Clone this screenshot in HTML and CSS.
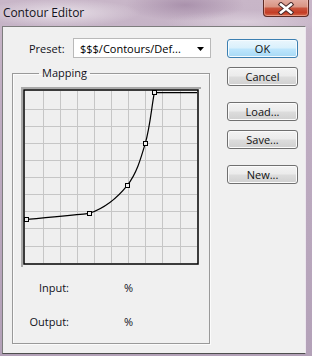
FILE: index.html
```html
<!DOCTYPE html>
<html>
<head>
<meta charset="utf-8">
<title>Contour Editor</title>
<link rel="stylesheet" href="styles.css">
</head>
<body>
<div class="window">
  <div class="titlebar">
    <span class="title">Contour Editor</span>
    <button class="close" aria-label="Close">
      <svg width="18" height="13" viewBox="0 0 18 13">
        <path d="M4 2.5 L14 10.5 M14 2.5 L4 10.5" stroke="#4a2a2a" stroke-width="4.6" stroke-linecap="square" fill="none"/>
        <path d="M4 2.5 L14 10.5 M14 2.5 L4 10.5" stroke="#ffffff" stroke-width="2.6" stroke-linecap="square" fill="none"/>
      </svg>
    </button>
  </div>
  <div class="client">
    <div class="left">
      <div class="preset-row">
        <span class="label">Preset:</span>
        <div class="select">
          <span class="select-text">$$$/Contours/Def...</span>
          <svg class="arrow" width="7" height="4" viewBox="0 0 7 4"><path d="M0 0 H7 L3.5 4 Z" fill="#000"/></svg>
        </div>
      </div>
      <fieldset class="group">
        <legend>Mapping</legend>
        <svg class="graph" width="180" height="180" viewBox="0 0 180 180">
          <rect x="0" y="0" width="180" height="180" fill="#f0f0f0"/>
          <path d="M1 0 V180 M0 1 H180" stroke="#a9a9a9" stroke-width="2"/>
          <rect x="3" y="3" width="174" height="174" fill="#efefef"/>
          <g stroke="#c6c6c6" stroke-width="1">
            <path d="M22.5 4 V176 M39.5 4 V176 M56.5 4 V176 M73.5 4 V176 M90.5 4 V176 M107.5 4 V176 M124.5 4 V176 M141.5 4 V176 M159.5 4 V176"/>
            <path d="M4 22.5 H176 M4 39.5 H176 M4 56.5 H176 M4 73.5 H176 M4 90.5 H176 M4 107.5 H176 M4 124.5 H176 M4 141.5 H176 M4 159.5 H176"/>
          </g>
          <rect x="3" y="3" width="174" height="174" fill="none" stroke="#000" stroke-width="1.5"/>
          <path d="M5.7 132.3 C26 130.5 48 128.5 68.3 126.3 C85.1 120.6 97 110 106.3 98.3 C115.6 86.6 119.8 71.7 124.3 56.3 C128.8 40.9 130.3 22.6 133.3 5.7 L176 5.7" fill="none" stroke="#000" stroke-width="1.2"/>
          <g fill="#eeeeee" stroke="#000" stroke-width="1">
            <rect x="3.5" y="130.5" width="4" height="4"/>
            <rect x="66.5" y="124.5" width="4" height="4"/>
            <rect x="104.5" y="96.5" width="4" height="4"/>
            <rect x="122.5" y="54.5" width="4" height="4"/>
            <rect x="131.5" y="3.5" width="4" height="4"/>
          </g>
        </svg>
        <div class="readouts">
          <div class="readout"><span class="rl">Input:</span><span class="pct">%</span></div>
          <div class="readout"><span class="rl">Output:</span><span class="pct">%</span></div>
        </div>
      </fieldset>
    </div>
    <div class="buttons">
      <button class="btn default">OK</button>
      <button class="btn">Cancel</button>
      <button class="btn spaced">Load...</button>
      <button class="btn">Save...</button>
      <button class="btn spaced">New...</button>
    </div>
  </div>
</div>
</body>
</html>
```

FILE: styles.css
```css
* { box-sizing: border-box; }
html, body { margin: 0; padding: 0; }
body {
  width: 312px;
  height: 356px;
  overflow: hidden;
  font-family: "Open Sans", "Noto Sans", sans-serif;
  font-size: 11px;
  color: #10101a;
}
.window {
  width: 312px;
  height: 356px;
  display: flex;
  flex-direction: column;
  background:
    radial-gradient(ellipse 80px 14px at 60px 13px, rgba(240,235,240,0.8), rgba(240,235,240,0) 100%),
    radial-gradient(ellipse 60px 16px at 185px 5px, rgba(140,110,145,0.5), rgba(140,110,145,0) 100%),
    radial-gradient(ellipse 80px 12px at 245px 22px, rgba(228,218,228,0.65), rgba(228,218,228,0) 100%),
    linear-gradient(180deg, #c8b6c8 0%, #bfadc2 30%, #b3a1b8 100%);
}
.titlebar {
  height: 26px;
  display: flex;
  align-items: flex-start;
  justify-content: space-between;
  padding-left: 3px;
  padding-right: 3px;
}
.title {
  font-family: "Open Sans", "Noto Sans", sans-serif;
  font-size: 12px;
  line-height: 26px;
  color: #141420;
  letter-spacing: -0.1px;
}
.close {
  width: 46px;
  height: 18px;
  margin-top: -1px;
  padding: 0;
  border: 1px solid #5e2c26;
  border-top: none;
  border-radius: 0 0 4px 4px;
  background: linear-gradient(180deg, #e3b0a6 0%, #d99584 45%, #c8533c 55%, #c43d26 80%, #d46a4e 100%);
  box-shadow: inset 0 0 0 1px rgba(255,210,200,0.45);
  display: flex;
  align-items: center;
  justify-content: center;
}
.close svg { display: block; margin-top: 1px; }
.client {
  flex: 1;
  margin: 0 6px 2px 2px;
  border-top: 1px solid #7d7d7d;
  border-left: 1px solid #7d7d7d;
  border-bottom: 1px solid #4e4e4e;
  border-right: 1px solid #ece6ee;
  background: #f0f0f0;
  display: flex;
}
.left {
  width: 211px;
  padding-left: 9px;
  display: flex;
  flex-direction: column;
}
.preset-row {
  margin-top: 11px;
  padding-left: 17px;
  height: 20px;
  display: flex;
  align-items: center;
}
.label {
  width: 44px;
  font-size: 11px;
}
.select {
  width: 138px;
  height: 20px;
  background: #fff;
  border: 1px solid #b9b9b9;
  display: flex;
  align-items: center;
  justify-content: space-between;
  padding: 0 6px 0 6px;
  color: #000;
}
.select-text { font-size: 11px; }
.arrow { display: block; margin-top: 1px; }
.group {
  margin: 8px 0 0 0;
  width: 198px;
  padding: 7px 0 14px 8px;
  border: 1px solid #999999;
  box-shadow: inset 1px 1px 0 #fbfbfb, 1px 1px 0 #fbfbfb;
  min-width: 0;
}
.group legend {
  margin-left: 18px;
  padding: 0 3px;
  line-height: 14px;
  font-size: 11px;
}
.graph { display: block; }
.readouts {
  margin-top: 12px;
  display: flex;
  flex-direction: column;
  gap: 18px;
}
.readout {
  height: 16px;
  display: flex;
  align-items: center;
}
.rl {
  width: 48px;
  text-align: right;
}
.pct { margin-left: 55px; }
.buttons {
  padding-left: 13px;
  padding-top: 12px;
  display: flex;
  flex-direction: column;
}
.btn {
  width: 71px;
  height: 19px;
  margin: 0 0 9px 0;
  padding: 0;
  font-family: "Open Sans", "Noto Sans", sans-serif;
  font-size: 11px;
  line-height: 17px;
  color: #111;
  border: 1px solid #707070;
  border-radius: 3px;
  background: linear-gradient(180deg, #f3f3f3 0%, #ebebeb 48%, #dddddd 52%, #d0d0d0 100%);
  box-shadow: inset 0 0 0 1px #fbfbfb;
}
.btn.spaced { margin-top: 7px; }
.btn.default {
  border-color: #3c7fb1;
  background: linear-gradient(180deg, #eaf6fd 0%, #d9f0fc 48%, #bee6fd 52%, #a7d9f5 100%);
  box-shadow: inset 0 0 0 1px #f4fbff;
}
```
